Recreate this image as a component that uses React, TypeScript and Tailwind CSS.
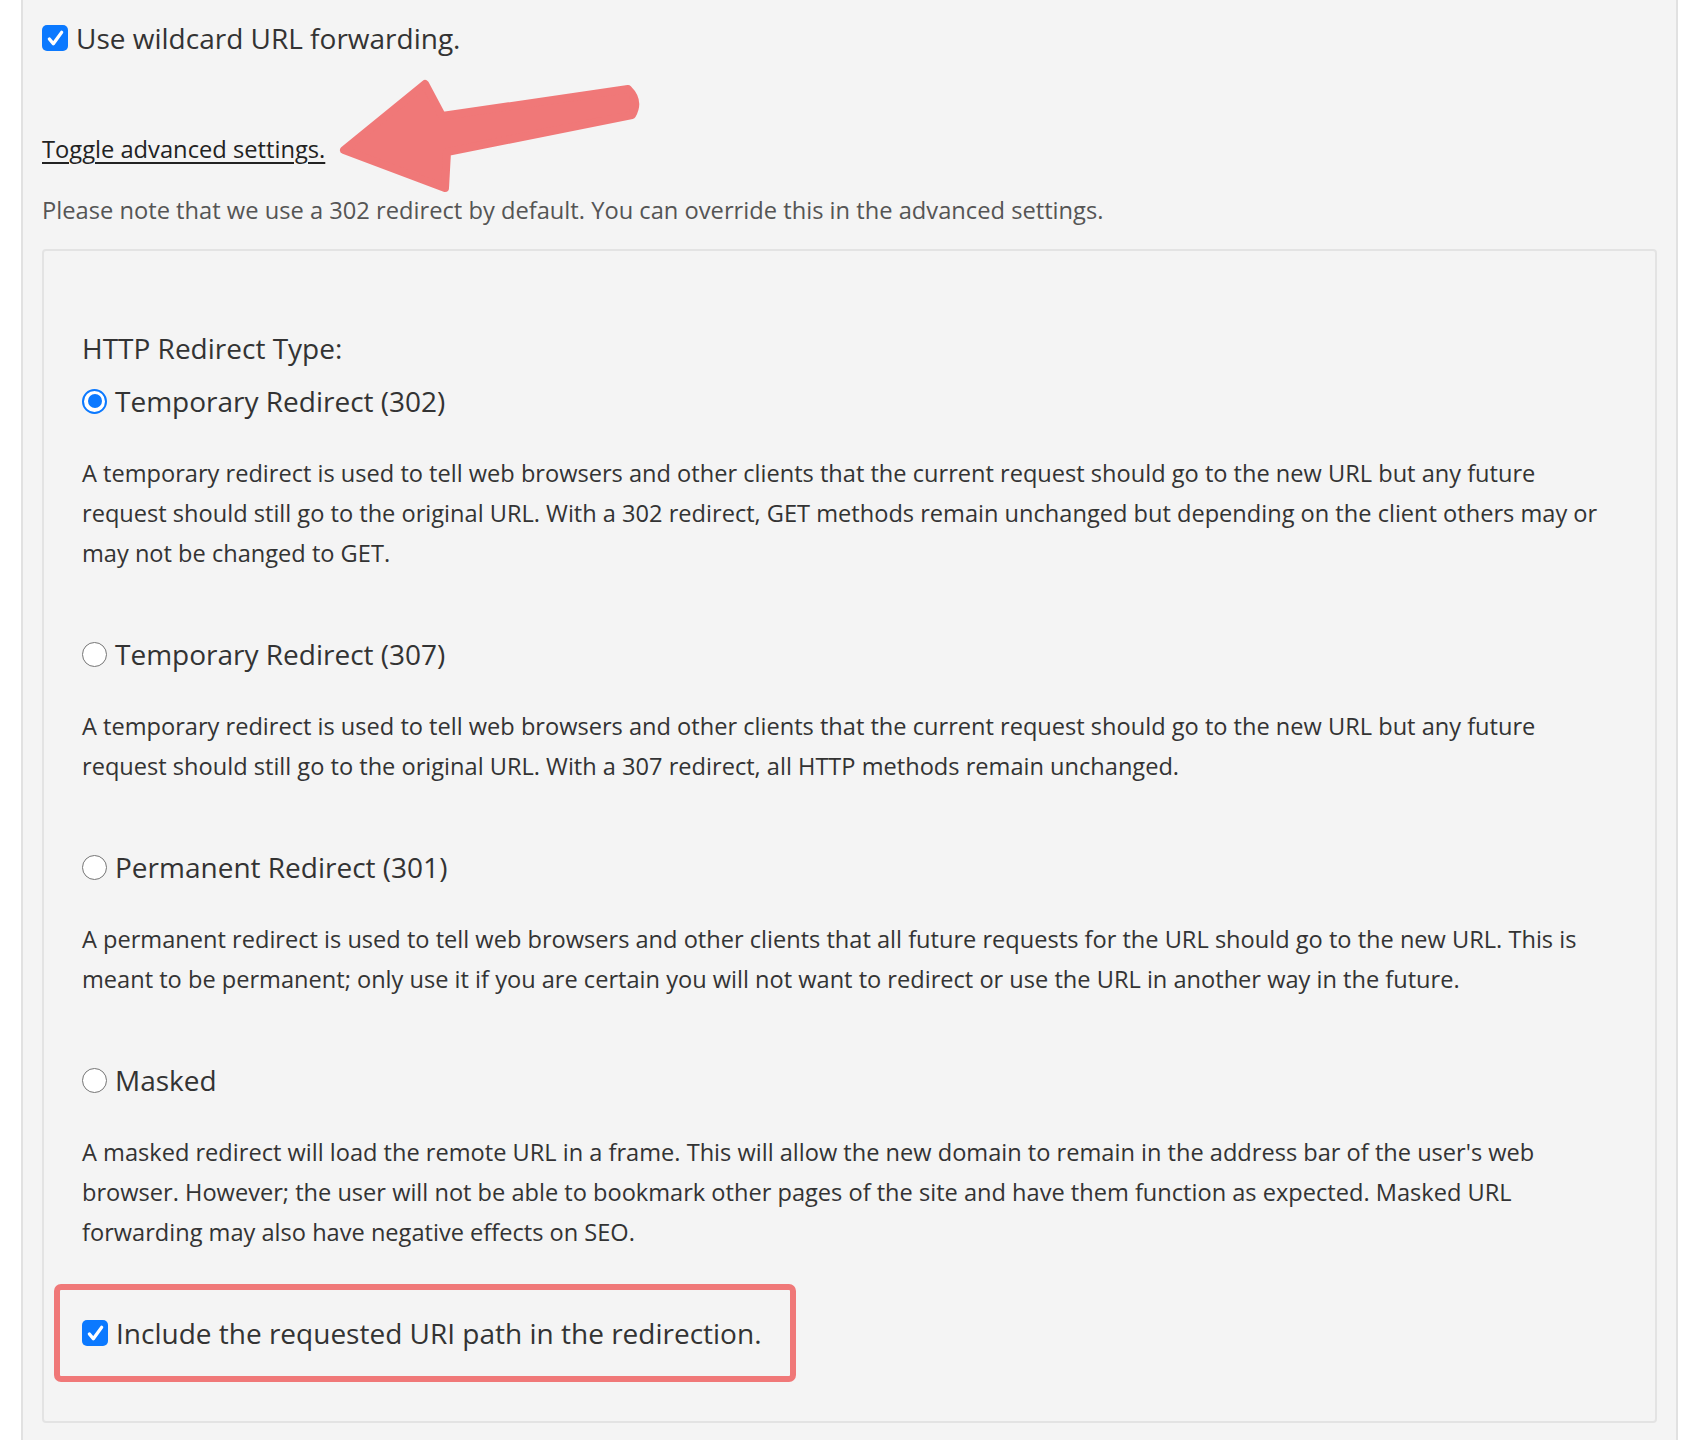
import React from "react";

const options = [
  {
    label: "Temporary Redirect (302)",
    checked: true,
    text: "A temporary redirect is used to tell web browsers and other clients that the current request should go to the new URL but any future request should still go to the original URL. With a 302 redirect, GET methods remain unchanged but depending on the client others may or may not be changed to GET.",
  },
  {
    label: "Temporary Redirect (307)",
    checked: false,
    text: "A temporary redirect is used to tell web browsers and other clients that the current request should go to the new URL but any future request should still go to the original URL. With a 307 redirect, all HTTP methods remain unchanged.",
  },
  {
    label: "Permanent Redirect (301)",
    checked: false,
    text: "A permanent redirect is used to tell web browsers and other clients that all future requests for the URL should go to the new URL. This is meant to be permanent; only use it if you are certain you will not want to redirect or use the URL in another way in the future.",
  },
  {
    label: "Masked",
    checked: false,
    text: "A masked redirect will load the remote URL in a frame. This will allow the new domain to remain in the address bar of the user's web browser. However; the user will not be able to bookmark other pages of the site and have them function as expected. Masked URL forwarding may also have negative effects on SEO.",
  },
];

function Checkbox() {
  return (
    <span className="flex h-[26px] w-[26px] shrink-0 items-center justify-center rounded-[5px] bg-[#0b79ff]">
      <svg viewBox="0 0 24 24" className="h-[21px] w-[21px]" fill="none" stroke="white" strokeWidth={3.8} strokeLinecap="round" strokeLinejoin="round">
        <path d="M5 12.5l4.5 5.5L19 5" />
      </svg>
    </span>
  );
}

function Radio({ checked }: { checked: boolean }) {
  if (checked) {
    return (
      <span className="flex h-[25px] w-[25px] shrink-0 items-center justify-center rounded-full border-[2.5px] border-[#0b79ff] bg-white">
        <span className="h-[14px] w-[14px] rounded-full bg-[#0b79ff]" />
      </span>
    );
  }
  return <span className="h-[25px] w-[25px] shrink-0 rounded-full border-[1.5px] border-[#757575] bg-white" />;
}

export default function App() {
  return (
    <div className="relative min-h-[1440px] bg-white font-['Open_Sans',sans-serif] text-[#333]">
      <div className="ml-[21px] min-h-[1440px] w-[1657px] border-x-2 border-[#e1e1e1] bg-[#f4f4f4] px-[19px] pt-[20px] pb-[20px]">
        <label className="flex items-center gap-[8px] text-[28px] leading-[36px]">
          <Checkbox />
          Use wildcard URL forwarding.
        </label>

        <a href="#" className="mt-[77px] block w-fit text-[23.7px] leading-[32px] text-[#222] underline underline-offset-[4px] decoration-[1.5px]">
          Toggle advanced settings.
        </a>

        <p className="mt-[29px] text-[23.7px] leading-[32px] text-[#555]">
          Please note that we use a 302 redirect by default. You can override this in the advanced settings.
        </p>

        <div className="mt-[23px] rounded-[4px] border-2 border-[#e3e3e3] pt-[79px] pr-[37px] pb-[70px] pl-[38px]">
          <div className="text-[28px] leading-[36px]">HTTP Redirect Type:</div>

          <div className="mt-[17px] flex flex-col gap-[63px]">
            {options.map((opt) => (
              <div key={opt.label}>
                <label className="flex items-center gap-[8px] text-[28px] leading-[36px]">
                  <Radio checked={opt.checked} />
                  {opt.label}
                </label>
                <p className="mt-[34px] text-[23.6px] leading-[40px]">{opt.text}</p>
              </div>
            ))}
          </div>

          <div className="relative mt-[63px] w-fit">
            <label className="flex items-center gap-[8px] text-[28px] leading-[36px]">
              <Checkbox />
              Include the requested URI path in the redirection.
            </label>
            {/* highlight annotation */}
            <span className="pointer-events-none absolute -top-[31px] -bottom-[31px] -left-[28px] -right-[34px] rounded-[7px] border-[6px] border-[#f07878]" />
          </div>
        </div>
      </div>

      {/* arrow annotation */}
      <svg className="pointer-events-none absolute left-0 top-0" width="700" height="220" viewBox="0 0 700 220">
        <path
          d="M344 150 L425 84 L442 116 L628 89 Q640 101 632 115 L447 152 L445 188 Z"
          fill="#f07878"
          stroke="#f07878"
          strokeWidth={8}
          strokeLinejoin="round"
        />
      </svg>
    </div>
  );
}
